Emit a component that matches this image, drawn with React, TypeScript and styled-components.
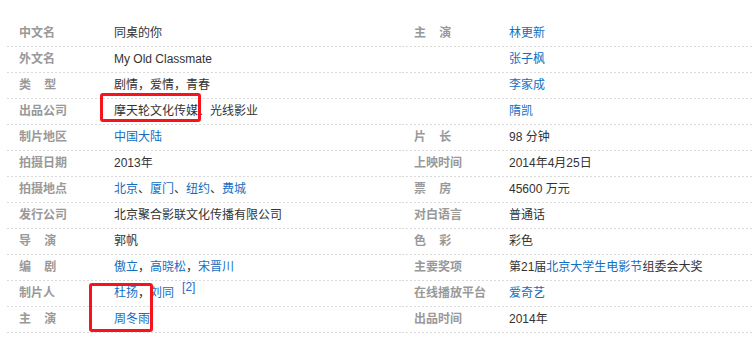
import React from 'react';
import styled, { createGlobalStyle } from 'styled-components';

const GlobalStyle = createGlobalStyle`
  html, body {
    margin: 0;
    padding: 0;
    background: #fff;
  }
  body {
    font-family: "Liberation Sans", Arial, "Noto Sans CJK SC", sans-serif;
    font-size: 12px;
    color: #333;
  }
`;

const Page = styled.div`
  position: relative;
  width: 752px;
  height: 345px;
  overflow: hidden;
  box-sizing: border-box;
  padding: 21px 0 0 7px;
  display: flex;
`;

const Block = styled.dl<{ $width?: number }>`
  margin: 0;
  width: ${(p) => (p.$width ? `${p.$width}px` : 'auto')};
  flex: ${(p) => (p.$width ? 'none' : '1')};
  display: flex;
  flex-direction: column;
`;

const Row = styled.div`
  display: flex;
  height: 26px;
  line-height: 25px;
  box-sizing: border-box;
  background-image: linear-gradient(to right, #d9d9d9 50%, transparent 50%);
  background-size: 4px 1px;
  background-repeat: repeat-x;
  background-position: 0 bottom;
`;

const Name = styled.dt`
  width: 90px;
  padding: 0 5px 0 12px;
  font-weight: 700;
  color: #999;
  white-space: pre;
  flex: none;
`;

const Value = styled.dd`
  margin: 0;
  flex: 1;
  padding-right: 12px;
  color: #333;
  white-space: nowrap;
`;

const Link = styled.a`
  color: #136ec2;
  text-decoration: none;
`;

const Sup = styled.sup`
  font-size: 12px;
  color: #3366cc;
  margin-left: 8px;
  line-height: 0;
  vertical-align: 6px;
`;

const Mark = styled.div<{ $x: number; $y: number; $w: number; $h: number }>`
  position: absolute;
  left: ${(p) => p.$x}px;
  top: ${(p) => p.$y}px;
  width: ${(p) => p.$w}px;
  height: ${(p) => p.$h}px;
  box-sizing: border-box;
  border: 3px solid #f5141b;
  border-radius: 3px;
  pointer-events: none;
`;

const sp = '\u00a0\u00a0\u00a0\u00a0';

interface Item {
  name: string;
  value: React.ReactNode;
}

const left: Item[] = [
  { name: '中文名', value: '同桌的你' },
  { name: '外文名', value: 'My Old Classmate' },
  { name: `类${sp}型`, value: '剧情，爱情，青春' },
  { name: '出品公司', value: '摩天轮文化传媒、光线影业' },
  { name: '制片地区', value: <Link>中国大陆</Link> },
  { name: '拍摄日期', value: '2013年' },
  {
    name: '拍摄地点',
    value: (
      <>
        <Link>北京</Link>、<Link>厦门</Link>、<Link>纽约</Link>、<Link>费城</Link>
      </>
    ),
  },
  { name: '发行公司', value: '北京聚合影联文化传播有限公司' },
  { name: `导${sp}演`, value: '郭帆' },
  {
    name: `编${sp}剧`,
    value: (
      <>
        <Link>傲立</Link>，<Link>高晓松</Link>，<Link>宋晋川</Link>
      </>
    ),
  },
  {
    name: '制片人',
    value: (
      <>
        <Link>杜扬</Link>，<Link>刘同</Link>
        <Sup>[2]</Sup>
      </>
    ),
  },
  { name: `主${sp}演`, value: <Link>周冬雨</Link> },
];

const right: Item[] = [
  { name: `主${sp}演`, value: <Link>林更新</Link> },
  { name: '', value: <Link>张子枫</Link> },
  { name: '', value: <Link>李家成</Link> },
  { name: '', value: <Link>隋凯</Link> },
  { name: `片${sp}长`, value: '98 分钟' },
  { name: '上映时间', value: '2014年4月25日' },
  { name: `票${sp}房`, value: '45600 万元' },
  { name: '对白语言', value: '普通话' },
  { name: `色${sp}彩`, value: '彩色' },
  {
    name: '主要奖项',
    value: (
      <>
        第21届<Link>北京大学生电影节</Link>组委会大奖
      </>
    ),
  },
  { name: '在线播放平台', value: <Link>爱奇艺</Link> },
  { name: '出品时间', value: '2014年' },
];

function InfoBlock({ items, width }: { items: Item[]; width?: number }) {
  return (
    <Block $width={width}>
      {items.map((item, i) => (
        <Row key={i}>
          <Name>{item.name}</Name>
          <Value>{item.value}</Value>
        </Row>
      ))}
    </Block>
  );
}

export default function App() {
  return (
    <>
      <GlobalStyle />
      <Page>
        <InfoBlock items={left} width={395} />
        <InfoBlock items={right} />
        <Mark $x={100} $y={93} $w={101} $h={29} />
        <Mark $x={89} $y={283} $w={64} $h={49} />
      </Page>
    </>
  );
}
